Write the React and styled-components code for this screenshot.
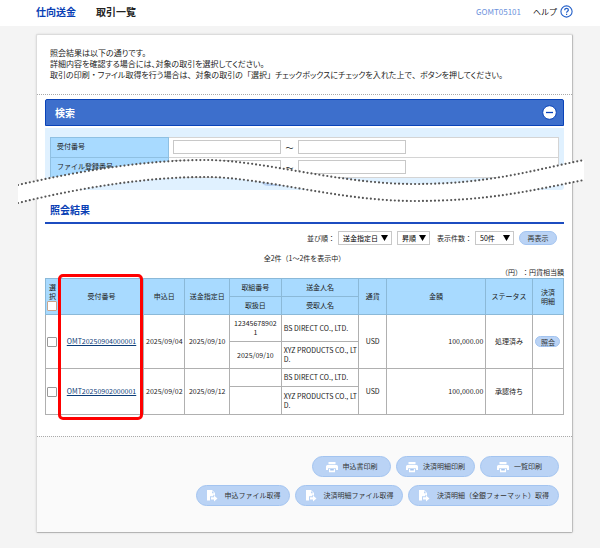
import React from "react";
import styled, { createGlobalStyle, css } from "styled-components";

//#region styled components
const GlobalStyle = createGlobalStyle`
  * {
    box-sizing: border-box;
  }
  body {
    margin: 0;
    background: #f4f4f4;
    color: #222;
    font-family: "Noto Sans CJK JP", "Noto Sans", sans-serif;
    font-size: 7px;
    line-height: 11px;
    text-spacing-trim: space-all;
  }
  button, input, select {
    font: inherit;
    color: inherit;
  }
`;
const Header = styled.header`
  display: flex;
  align-items: center;
  gap: 20px;
  height: 26px;
  padding: 0 27px 4px 36px;
  background: #fff;
`;
const Category = styled.strong`
  color: #0a3fb5;
  font-size: 10px;
`;
const Title = styled.h1`
  flex: 1;
  margin: 0;
  font-size: 10px;
`;
const ScreenId = styled.span`
  color: #6d93dc;
  font-size: 8px;
`;
const Help = styled.a`
  display: flex;
  align-items: center;
  gap: 3px;
  margin-left: -8px;
  color: #111;
  font-size: 8px;
  text-decoration: none;
`;
const Panel = styled.main`
  margin: 8px 27px 16px 36px;
  background: #fff;
  border: 1px solid #dcdcdc;
  border-right-color: #bdbdbd;
  border-bottom-color: #b4b4b4;
  border-radius: 2px;
  box-shadow: 0 0 2px #d0d0d0;
`;
const Intro = styled.p`
  margin: 0;
  padding: 12px 13px 14px;
  border-bottom: 1px dotted #aaa;
  font-size: 8px;
  font-feature-settings: "palt";
`;
const Term = styled.span`
  font-feature-settings: normal;
`;
const Body = styled.div`
  padding: 4px 8px 21px;
`;
const Search = styled.section`
  position: relative;
`;
const SearchBar = styled.div`
  display: flex;
  align-items: center;
  justify-content: space-between;
  height: 27px;
  padding: 0 6px 0 9px;
  background: #3d6fcc;
  border: 1px solid #0a43b8;
  border-radius: 2px 2px 0 0;
  color: #fff;
  h2 {
    margin: 0;
    font-size: 10px;
  }
`;
const Collapse = styled.button`
  display: flex;
  padding: 0;
  border: 0;
  background: none;
`;
const SearchBody = styled.div`
  height: 62px;
  margin-top: 2px;
  padding: 9px 5px 0;
  background: #e0f1ff;
  border-radius: 0 0 3px 3px;
`;
const SearchRow = styled.div`
  display: flex;
  height: 20px;
  background: #fff;
  border: 1px solid #d4d4d4;
  border-bottom: 0;
`;
const SearchLabel = styled.label`
  display: flex;
  align-items: center;
  width: 119px;
  margin: -1px 0 0 -1px;
  padding: 0 0 2px 6px;
  background: #a8daff;
  border: 1px solid #8fc0e2;
  border-bottom: 0;
`;
const Range = styled.div`
  display: flex;
  align-items: center;
  gap: 4px;
  padding: 0 0 1px 4px;
`;
const RangeMark = styled.span`
  width: 9px;
  font-size: 8px;
  text-align: center;
`;
const TextBox = styled.input`
  width: 108px;
  height: 14px;
  padding: 0 2px;
  background: #fff;
  border: 1px solid #c8c8c8;
`;
const SubmitPeek = styled.div`
  display: flex;
  justify-content: center;
  border-top: 1px solid #d4d4d4;
  button {
    width: 90px;
    height: 8px;
    padding: 0;
    background: #b9d3f4;
    border: 0;
    border-radius: 0 0 8px 8px;
  }
`;
const Tear = styled.svg`
  position: absolute;
  top: 59px;
  left: -27px;
  width: calc(100% + 47px);
  height: 48px;
`;
const ResultTitle = styled.h2`
  margin: 13px 0 7px;
  padding: 0 5px 5px;
  border-bottom: 2px solid #1c4cc0;
  color: #0a3fb5;
  font-size: 10px;
  line-height: 14px;
`;
const Sorting = styled.div`
  display: flex;
  align-items: center;
  justify-content: flex-end;
  gap: 5px;
  padding-right: 7px;
`;
const Field = styled.label`
  display: flex;
  align-items: center;
  gap: 3px;
  margin-left: ${({ $offset }) => $offset || 0}px;
`;
const SelectWrap = styled.span`
  display: grid;
  align-items: center;
  > * {
    grid-area: 1 / 1;
  }
  svg {
    justify-self: end;
    margin-right: 4px;
    pointer-events: none;
  }
`;
const Select = styled.select`
  width: ${({ $width }) => $width}px;
  height: 14px;
  padding: 0 4px;
  appearance: none;
  background: #fff;
  border: 1px solid #c8c8c8;
  border-radius: 0;
  color: #000;
`;
const pill = css`
  background: #bad3f5;
  border: 1px solid #a3c4f0;
  border-radius: 11px;
  color: #333;
  white-space: nowrap;
`;
const SmallButton = styled.button`
  ${pill}
  width: ${({ $width }) => $width}px;
  height: ${({ $height }) => $height}px;
  padding: 0;
  line-height: 8px;
`;
const Count = styled.p`
  margin: 8px 0 3px;
  text-align: center;
`;
const Note = styled.p`
  margin: 0;
  text-align: right;
`;
const TableWrap = styled.div`
  position: relative;
`;
const Table = styled.table`
  width: 100%;
  table-layout: fixed;
  border-collapse: collapse;
  line-height: 9px;
  th,
  td {
    padding: 0 2px;
    border: 1px solid #b0b0b0;
    font-weight: 400;
    text-align: center;
  }
  th {
    height: 18px;
    background: #a8daff;
    border-color: #8bb9d8;
  }
  a {
    color: #0b3c78;
  }
`;
const Column = styled.col`
  width: ${({ $width }) => $width};
`;
const Line = styled.tr`
  height: ${({ $height }) => $height}px;
`;
const NameCell = styled.td`
  && {
    padding-right: 0;
    text-align: left;
    word-break: break-all;
  }
`;
const NumberCell = styled.td`
  && {
    padding: 0 4px;
    word-break: break-all;
  }
`;
const AmountCell = styled.td`
  && {
    text-align: right;
  }
`;
const Check = styled.input`
  display: block;
  width: 10px;
  height: 10px;
  margin: 0 0 0 -1px;
  appearance: none;
  background: #fff;
  border: 1px solid ${({ $warm }) => ($warm ? "#c9a58c" : "#999")};
  border-radius: 1px;
`;
const Highlight = styled.div`
  position: absolute;
  top: -4px;
  bottom: -5px;
  left: 13px;
  width: 85px;
  border: 3px solid #f00;
  border-radius: 5px;
  pointer-events: none;
`;
const Actions = styled.footer`
  display: flex;
  flex-direction: column;
  gap: 8px;
  padding: 19px 13px 26px;
  background: #fafafa;
  border-top: 1px dotted #aaa;
`;
const ActionRow = styled.div`
  display: flex;
  justify-content: flex-end;
  gap: 5px;
`;
const ActionButton = styled.button`
  ${pill}
  display: flex;
  align-items: center;
  justify-content: center;
  gap: ${({ $gap }) => $gap}px;
  width: ${({ $width }) => $width}px;
  height: 21px;
  padding: 0;
`;
//#endregion

const PrintIcon = () => (
  <svg width="12" height="12" viewBox="0 0 12 12">
    <path
      fill="#fff"
      d="M2.500 1h7v2.200h-7zM1.500 4h9q1.500 0 1.500 1.500V9h-2V7.200H2V9H0V5.500Q0 4 1.500 4zM3 8h6v3.300H3z"
    />
    <path stroke="#8fb6ec" strokeWidth="1.200" d="M4.200 8.800h3.600" />
  </svg>
);

const FileIcon = () => (
  <svg width="12" height="13" viewBox="0 0 12 13">
    <path fill="#fff" d="M1 1h5l3 3v7.500H1z" />
    <path fill="#bad3f5" d="M6 2v2.300H8.300zM4 7.300h3.300V5.500l4.700 4L7.500 13H4z" />
    <path fill="#fff" d="M5 8.200h3V6.400l3.500 3L8 12.400v-1.800H5z" />
  </svg>
);

const DropDown = ({ width, label, value }) => (
  <SelectWrap>
    <Select $width={width} aria-label={label} defaultValue={value}>
      <option>{value}</option>
    </Select>
    <svg width="7" height="6" viewBox="0 0 7 6">
      <path d="M0 0h7L3.500 6z" />
    </svg>
  </SelectWrap>
);

const RangeField = ({ id, label }) => (
  <SearchRow>
    <SearchLabel htmlFor={id}>{label}</SearchLabel>
    <Range>
      <TextBox id={id} />
      <RangeMark>～</RangeMark>
      <TextBox aria-label={`${label} 終了`} />
    </Range>
  </SearchRow>
);

const upper = "M0 27C65 12 130 2 187 2S320 26 395 26S510 13 565 2";
const lower = "M0 45C65 29 130 19 187 19S320 43 395 43S510 33 565 22";
const lowerBack =
  "L565 22C510 33 470 43 395 43C320 43 244 19 187 19C130 19 65 29 0 45z";

const columns = [
  "14px",
  "84px",
  "8%",
  "8.6%",
  "10%",
  "15%",
  "5.3%",
  "auto",
  "9%",
  "6%",
];

const transactions = [
  {
    id: "OMT20250904000001",
    applied: "2025/09/04",
    due: "2025/09/10",
    number: "123456789021",
    handled: "2025/09/10",
    status: "処理済み",
    detail: true,
    heights: [27, 27],
  },
  {
    id: "OMT20250902000001",
    applied: "2025/09/02",
    due: "2025/09/12",
    status: "承認待ち",
    heights: [18, 28],
  },
];

const Transaction = ({ data }) => (
  <>
    <Line $height={data.heights[0]}>
      <td rowSpan="2">
        <Check type="checkbox" aria-label={data.id} />
      </td>
      <td rowSpan="2">
        <a href="#detail">{data.id}</a>
      </td>
      <td rowSpan="2">{data.applied}</td>
      <td rowSpan="2">{data.due}</td>
      <NumberCell>{data.number}</NumberCell>
      <NameCell>BS DIRECT CO., LTD.</NameCell>
      <td rowSpan="2">USD</td>
      <AmountCell rowSpan="2">100,000.00</AmountCell>
      <td rowSpan="2">{data.status}</td>
      <td rowSpan="2">
        {data.detail && (
          <SmallButton $width={25} $height={11}>
            照会
          </SmallButton>
        )}
      </td>
    </Line>
    <Line $height={data.heights[1]}>
      <td>{data.handled}</td>
      <NameCell>XYZ PRODUCTS CO., LTD.</NameCell>
    </Line>
  </>
);

const App = () => (
  <>
    <GlobalStyle />
    <Header>
      <Category>仕向送金</Category>
      <Title>取引一覧</Title>
      <ScreenId>GOMT05101</ScreenId>
      <Help href="#help">
        ヘルプ
        <svg width="13" height="13" viewBox="0 0 13 13" fill="none" stroke="#2460c8">
          <circle cx="6.500" cy="6.500" r="5.600" strokeWidth="1.100" />
          <path
            strokeWidth="1.200"
            d="M4.700 5.200c0-2.500 3.700-2.300 3.700-.2 0 1.300-1.800 1.300-1.800 2.800M6.600 8.800v1.200"
          />
        </svg>
      </Help>
    </Header>
    <Panel>
      <Intro>
        照会結果は以下の通りです。
        <br />
        詳細内容を確認する場合には、対象の取引を選択してください。
        <br />
        取引の印刷<Term>・</Term>ファイル取得を行う場合は<Term>、</Term>
        対象の取引の<Term>「選択」</Term>
        チェックボックスにチェックを入れた上で<Term>、</Term>
        ボタンを押してください。
      </Intro>
      <Body>
        <Search>
          <SearchBar>
            <h2>検索</h2>
            <Collapse aria-label="閉じる">
              <svg width="15" height="15" viewBox="0 0 15 15">
                <circle cx="7.500" cy="7.500" r="6.800" fill="#fff" stroke="#0a43b8" />
                <path d="M4 7.500h7" stroke="#0a43b8" strokeWidth="1.300" />
              </svg>
            </Collapse>
          </SearchBar>
          <SearchBody>
            <RangeField id="receipt" label="受付番号" />
            <RangeField id="file" label="ファイル登録番号" />
            <SubmitPeek>
              <button aria-label="検索する" />
            </SubmitPeek>
          </SearchBody>
          <Tear viewBox="0 0 565 48" preserveAspectRatio="none" fill="none">
            <path fill="#fff" d={upper + lowerBack} />
            <g stroke="#555" strokeWidth="2.200" strokeLinecap="round" strokeDasharray="0 4">
              <path d={upper} />
              <path d={lower} />
            </g>
          </Tear>
        </Search>
        <ResultTitle>照会結果</ResultTitle>
        <Sorting>
          <Field>
            並び順：
            <DropDown width={54} value="送金指定日" />
          </Field>
          <DropDown width={33} label="昇順・降順" value="昇順" />
          <Field $offset={2}>
            表示件数：
            <DropDown width={39} value="50件" />
          </Field>
          <SmallButton $width={38} $height={14}>
            再表示
          </SmallButton>
        </Sorting>
        <Count>全2件（1～2件を表示中）</Count>
        <Note>（円）：円貨相当額</Note>
        <TableWrap>
          <Table>
            <colgroup>
              {columns.map((width, index) => (
                <Column key={index} $width={width} />
              ))}
            </colgroup>
            <thead>
              <tr>
                <th rowSpan="2">
                  選択
                  <Check type="checkbox" $warm aria-label="すべて選択" />
                </th>
                <th rowSpan="2">受付番号</th>
                <th rowSpan="2">申込日</th>
                <th rowSpan="2">送金指定日</th>
                <th>取組番号</th>
                <th>送金人名</th>
                <th rowSpan="2">通貨</th>
                <th rowSpan="2">金額</th>
                <th rowSpan="2">ステータス</th>
                <th rowSpan="2">
                  決済
                  <br />
                  明細
                </th>
              </tr>
              <tr>
                <th>取扱日</th>
                <th>受取人名</th>
              </tr>
            </thead>
            <tbody>
              {transactions.map((data) => (
                <Transaction key={data.id} data={data} />
              ))}
            </tbody>
          </Table>
          <Highlight />
        </TableWrap>
      </Body>
      <Actions>
        <ActionRow>
          {["申込書印刷", "決済明細印刷", "一覧印刷"].map((text) => (
            <ActionButton key={text} $width={79} $gap={5}>
              <PrintIcon />
              {text}
            </ActionButton>
          ))}
        </ActionRow>
        <ActionRow>
          <ActionButton $width={94} $gap={7}>
            <FileIcon />
            申込ファイル取得
          </ActionButton>
          <ActionButton $width={108} $gap={7}>
            <FileIcon />
            決済明細ファイル取得
          </ActionButton>
          <ActionButton $width={151} $gap={7}>
            <FileIcon />
            決済明細（全銀フォーマット）取得
          </ActionButton>
        </ActionRow>
      </Actions>
    </Panel>
  </>
);

export default App;
